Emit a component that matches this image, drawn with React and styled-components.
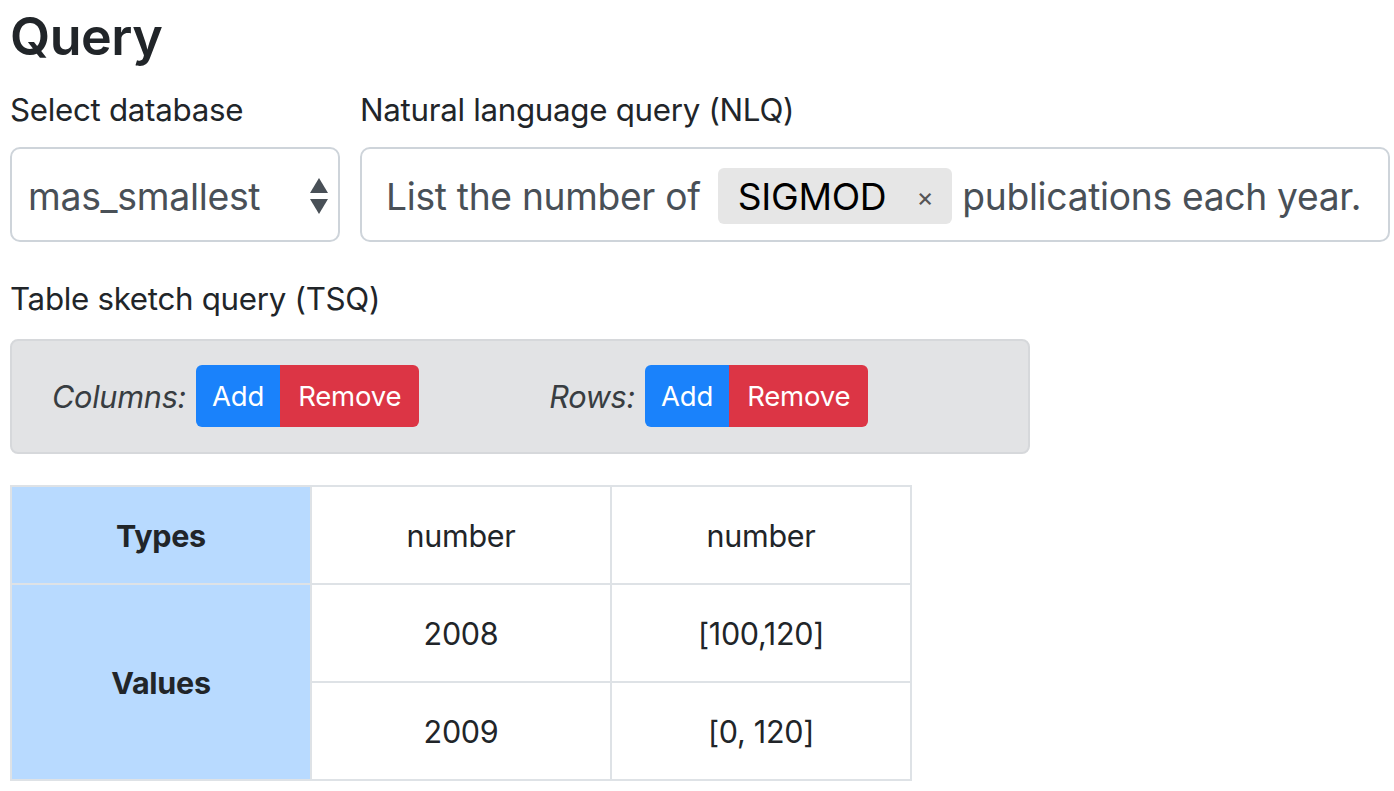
import React from 'react'
import styled, { createGlobalStyle } from 'styled-components'

const Global = createGlobalStyle`
  body {
    margin: 0;
    background: #fff;
    font-family: Inter, "Noto Sans", sans-serif;
    color: #212529;
  }
`

const Page = styled.div`
  padding: 6px 4px 0 10px;
`

const Title = styled.h2`
  margin: 0 0 22px;
  font-size: 52px;
  font-weight: 600;
  line-height: 1.2;
  letter-spacing: -0.5px;
`

const FormRow = styled.div`
  display: flex;
  gap: 20px;
`

const Field = styled.div`
  display: flex;
  flex-direction: column;
  width: ${props => props.width || 'auto'};
  flex: ${props => props.grow ? 1 : 'none'};
`

const Label = styled.label`
  font-size: 31.3px;
  line-height: 40px;
  margin-bottom: 17px;
  letter-spacing: -0.3px;
`

const SelectBox = styled.div`
  height: 95px;
  box-sizing: border-box;
  border: 2px solid #ced4da;
  border-radius: 10px;
  display: flex;
  align-items: center;
  justify-content: space-between;
  padding: 3px 8px 0 16px;
  font-size: 37.4px;
  color: #495057;
  letter-spacing: -0.3px;
`

const NlqBox = styled.div`
  height: 95px;
  box-sizing: border-box;
  border: 2px solid #ced4da;
  border-radius: 10px;
  display: flex;
  align-items: center;
  padding: 3px 0 0 24px;
  font-size: 37.2px;
  color: #495057;
  white-space: nowrap;
  letter-spacing: -0.3px;
`

const Chip = styled.span`
  display: inline-flex;
  align-items: center;
  height: 56px;
  margin: 0 10px 0 17px;
  padding: 0 19px 0 20px;
  background: #e6e6e6;
  border-radius: 6px;
  color: #000;
`

const ChipClose = styled.span`
  font-size: 26px;
  color: #555;
  margin-left: 30px;
`

const Section = styled.div`
  margin-top: 37px;
`

const Panel = styled.div`
  width: 1020px;
  box-sizing: border-box;
  margin-top: 20px;
  padding: 24px 40px 25px;
  background: #e2e3e5;
  border: 2px solid #d6d8db;
  border-radius: 8px;
  display: flex;
  align-items: center;
`

const Group = styled.div`
  display: flex;
  align-items: center;
  margin-right: 130px;
`

const GroupLabel = styled.span`
  font-size: 30.7px;
  font-style: italic;
  color: #383d41;
  margin-right: 10px;
  letter-spacing: -0.3px;
`

const Btn = styled.button`
  height: 62px;
  border: none;
  padding: 0 ${props => props.danger ? 18 : 16}px;
  font-family: inherit;
  font-size: 27.5px;
  color: #fff;
  background: ${props => props.danger ? '#dc3545' : '#1a82fb'};
  border-radius: ${props => props.danger ? '0 6px 6px 0' : '6px 0 0 6px'};
  letter-spacing: -0.2px;
`

const Table = styled.table`
  margin-top: 31px;
  border-collapse: collapse;
  font-size: 30.5px;
  letter-spacing: -0.3px;
`

const Cell = styled.td`
  width: 298px;
  height: 96px;
  padding: 0;
  border: 2px solid #dee2e6;
  text-align: center;
  vertical-align: middle;
  background: ${props => props.head ? '#b8daff' : '#fff'};
  font-weight: ${props => props.head ? 700 : 400};
`

const Arrows = () => (
  <svg width="22" height="38" viewBox="0 0 22 38">
    <path d="M11 1 L20 16 L2 16 Z" fill="#495057" />
    <path d="M11 37 L20 22 L2 22 Z" fill="#495057" />
  </svg>
)

const TableRow = ({ label, cells, span }) => (
  <tr>
    {label && <Cell head rowSpan={span}>{label}</Cell>}
    {cells.map((c, i) => <Cell key={i}>{c}</Cell>)}
  </tr>
)

export default function App() {
  return (
    <Page>
      <Global />
      <Title>Query</Title>
      <FormRow>
        <Field width="330px">
          <Label>Select database</Label>
          <SelectBox>
            mas_smallest
            <Arrows />
          </SelectBox>
        </Field>
        <Field grow>
          <Label>Natural language query (NLQ)</Label>
          <NlqBox>
            List the number of
            <Chip>SIGMOD<ChipClose>×</ChipClose></Chip>
            publications each year.
          </NlqBox>
        </Field>
      </FormRow>
      <Section>
        <Label>Table sketch query (TSQ)</Label>
        <Panel>
          <Group>
            <GroupLabel>Columns:</GroupLabel>
            <Btn>Add</Btn>
            <Btn danger>Remove</Btn>
          </Group>
          <Group>
            <GroupLabel>Rows:</GroupLabel>
            <Btn>Add</Btn>
            <Btn danger>Remove</Btn>
          </Group>
        </Panel>
      </Section>
      <Table>
        <tbody>
          <TableRow label="Types" cells={['number', 'number']} />
          <TableRow label="Values" span={2} cells={['2008', '[100,120]']} />
          <TableRow cells={['2009', '[0, 120]']} />
        </tbody>
      </Table>
    </Page>
  )
}
